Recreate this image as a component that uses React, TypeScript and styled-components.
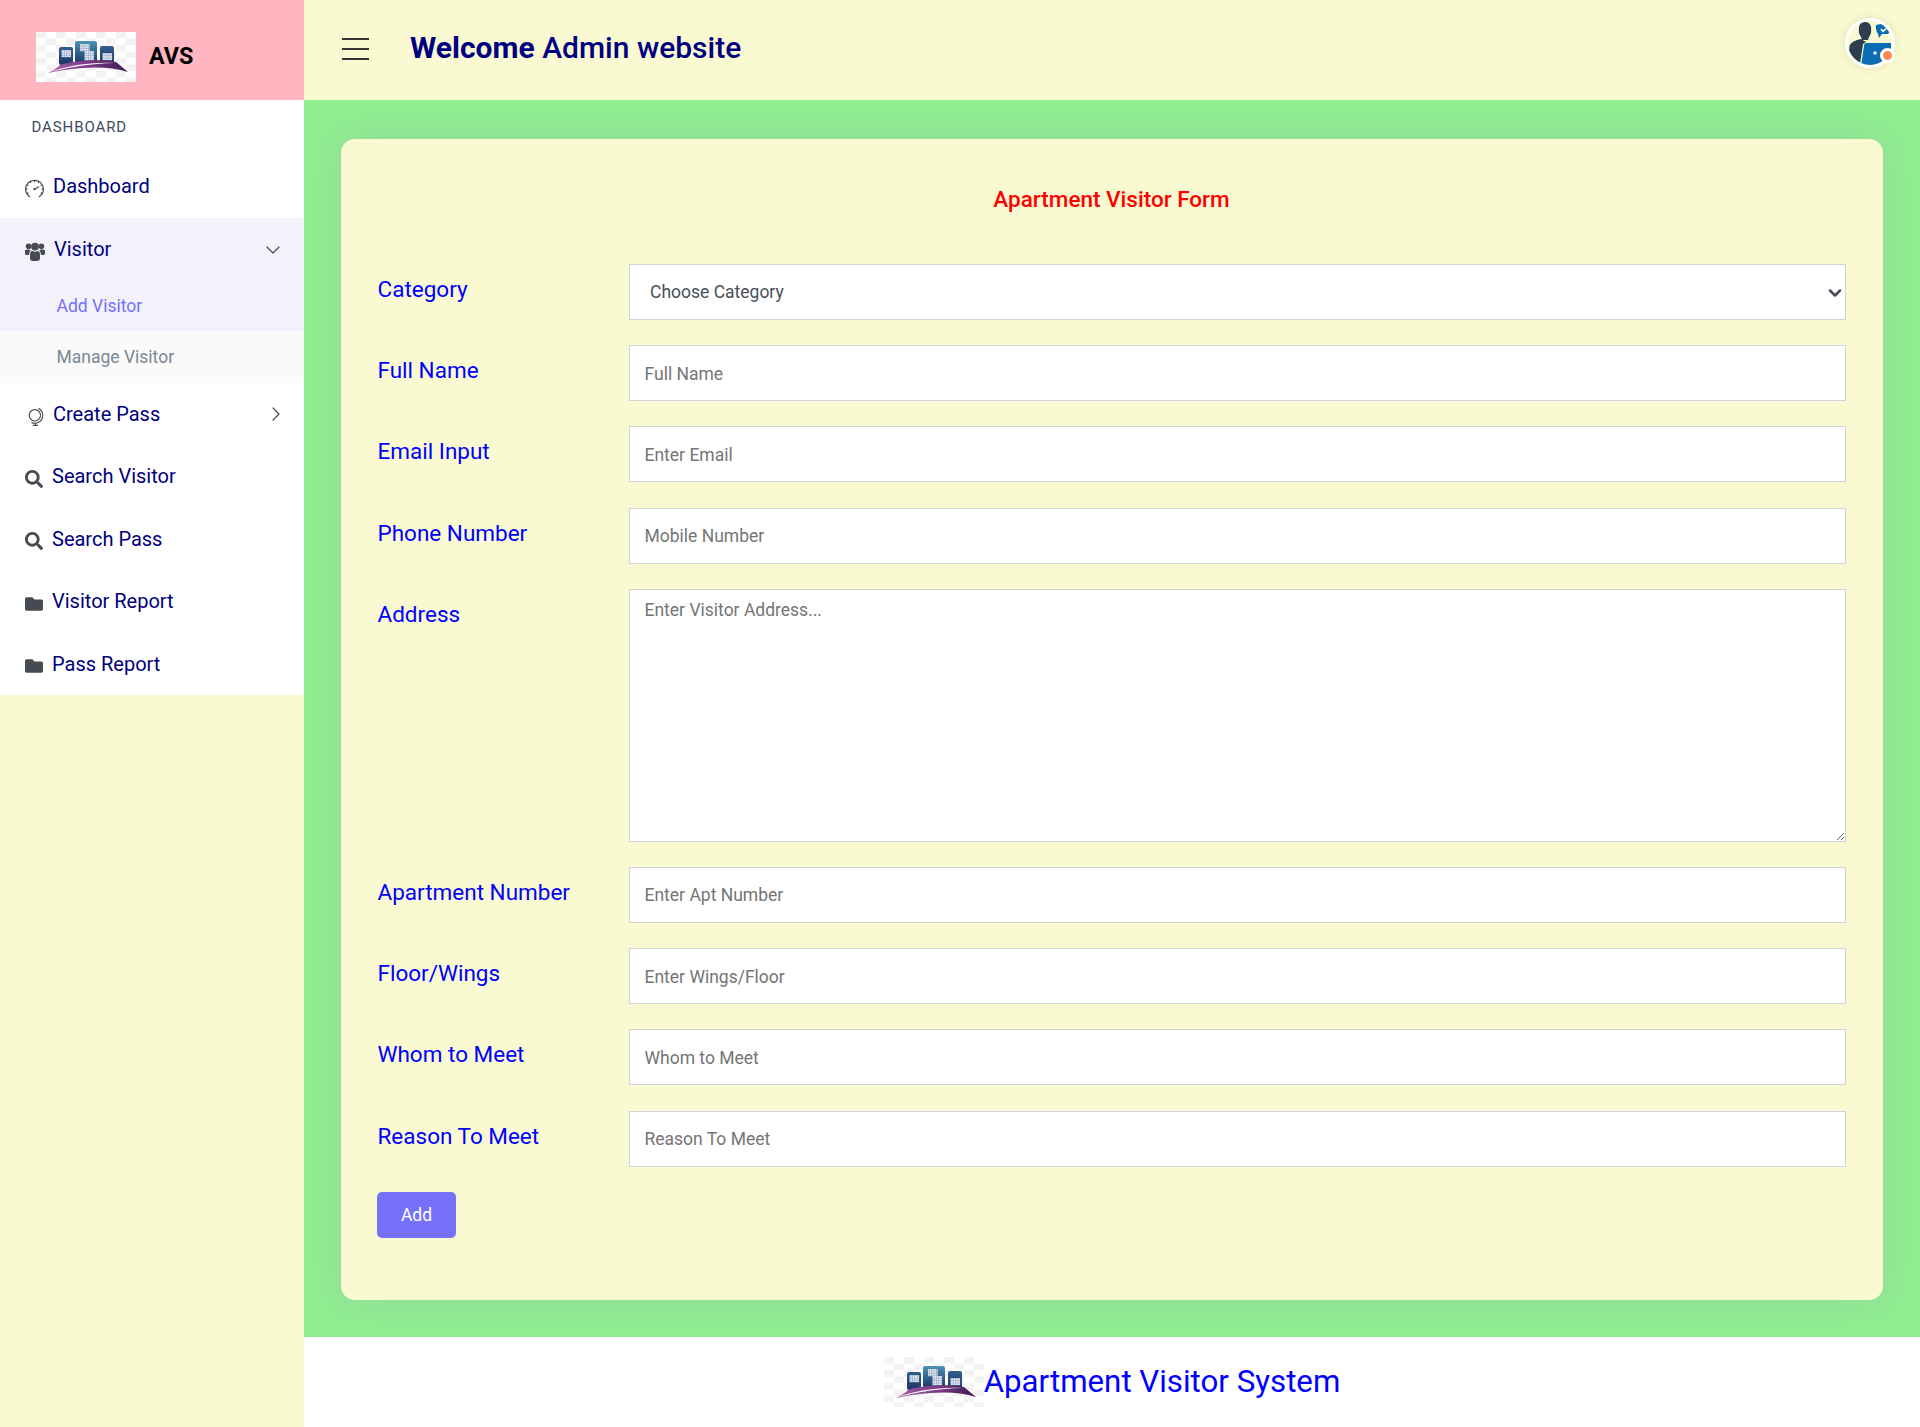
import React from 'react'
import styled, { createGlobalStyle } from 'styled-components'
import { SlSpeedometer, SlGlobeAlt } from 'react-icons/sl'
import { FaSearch, FaFolder } from 'react-icons/fa'
import { ChevronDown, ChevronRight } from 'lucide-react'

const Global = createGlobalStyle`
  html, body { margin: 0; padding: 0; }
  body { font-family: Roboto, "Liberation Sans", sans-serif; background: #fafad2; }
  * { box-sizing: border-box; }
`

const fields = [
  { label: 'Full Name', placeholder: 'Full Name' },
  { label: 'Email Input', placeholder: 'Enter Email' },
  { label: 'Phone Number', placeholder: 'Mobile Number' },
]
const fields2 = [
  { label: 'Apartment Number', placeholder: 'Enter Apt Number' },
  { label: 'Floor/Wings', placeholder: 'Enter Wings/Floor' },
  { label: 'Whom to Meet', placeholder: 'Whom to Meet' },
  { label: 'Reason To Meet', placeholder: 'Reason To Meet' },
]

const Logo = ({ id }: { id: string }) => (
  <LogoSvg viewBox="0 0 100 50">
    <defs>
      <pattern id={`check-${id}`} width="20" height="13" patternUnits="userSpaceOnUse">
        <rect width="20" height="13" fill="#fff" />
        <rect x="0" y="0" width="10" height="6.5" fill="#f3f3f3" />
        <rect x="10" y="6.5" width="10" height="6.5" fill="#f3f3f3" />
      </pattern>
      <pattern id={`win-${id}`} width="2.4" height="2.4" patternUnits="userSpaceOnUse">
        <rect width="2.4" height="2.4" fill="#dfe6f0" />
        <rect x="2" width="0.4" height="2.4" fill="#7f93b3" />
        <rect y="2" width="2.4" height="0.4" fill="#7f93b3" />
      </pattern>
      <linearGradient id={`tower-${id}`} x1="0" y1="0" x2="0" y2="1">
        <stop offset="0" stopColor="#2f5f8c" />
        <stop offset="1" stopColor="#1c3468" />
      </linearGradient>
      <linearGradient id={`mid-${id}`} x1="0" y1="0" x2="0" y2="1">
        <stop offset="0" stopColor="#4d94b5" />
        <stop offset="1" stopColor="#1c3468" />
      </linearGradient>
      <linearGradient id={`swoosh-${id}`} x1="0" y1="0" x2="1" y2="0">
        <stop offset="0" stopColor="#a860a8" />
        <stop offset="0.5" stopColor="#7c3a86" />
        <stop offset="1" stopColor="#3d1a55" />
      </linearGradient>
    </defs>
    <rect width="100" height="50" fill={`url(#check-${id})`} />
    <rect x="23" y="15" width="14" height="18" rx="2" fill={`url(#tower-${id})`} />
    <rect x="39" y="9" width="22" height="22" rx="2" fill={`url(#mid-${id})`} />
    <rect x="64" y="14" width="14" height="18" rx="2" fill={`url(#tower-${id})`} />
    <rect x="25.5" y="18" width="9.6" height="7.2" fill={`url(#win-${id})`} />
    <rect x="44" y="12" width="9.6" height="7.2" fill={`url(#win-${id})`} />
    <rect x="48.5" y="19" width="9.6" height="9.6" fill={`url(#win-${id})`} />
    <rect x="66.5" y="21" width="9.6" height="7.2" fill={`url(#win-${id})`} />
    <path d="M12 41 C 18 38, 22 35, 24 33 C 40 28, 65 27, 80 30 L 92 40 C 70 33, 40 35, 12 41 Z" fill={`url(#swoosh-${id})`} />
    <path d="M14 40 C 30 34, 55 30, 78 31 C 55 31.5, 35 35, 14 40 Z" fill="#fff" />
  </LogoSvg>
)

const UsersIcon = () => (
  <svg viewBox="0 0 20 19" width="20" height="19" fill="currentColor">
    <circle cx="3.6" cy="4.2" r="2.8" />
    <circle cx="16.4" cy="4.2" r="2.8" />
    <circle cx="10" cy="4.6" r="3.9" />
    <path d="M0 9.2 q0 -1.6 1.6 -1.6 l2.6 0 q0.6 0.6 1.4 1 q-1.6 1.6 -1.6 4.4 l-2.6 0 q-1.4 0 -1.4 -1.4 Z" />
    <path d="M20 9.2 q0 -1.6 -1.6 -1.6 l-2.6 0 q-0.6 0.6 -1.4 1 q1.6 1.6 1.6 4.4 l2.6 0 q1.4 0 1.4 -1.4 Z" />
    <path d="M5 12.6 q0 -3.2 2.4 -3.6 q2.6 1.4 5.2 0 q2.4 0.4 2.4 3.6 l0 4 q0 2.4 -2.4 2.4 l-5.2 0 q-2.4 0 -2.4 -2.4 Z" />
  </svg>
)

const App = () => {
  return (
    <Page>
      <Global />
      <Side>
        <Brand>
          <Logo id="side" />
          <BrandName>AVS</BrandName>
        </Brand>
        <Menu>
          <MenuTitle>DASHBOARD</MenuTitle>
          <MenuItem>
            <MenuIcon w={28}><SlSpeedometer size={19} /></MenuIcon>
            Dashboard
          </MenuItem>
          <OpenGroup>
            <MenuItem>
              <MenuIcon w={29}><UsersIcon /></MenuIcon>
              Visitor
              <Caret right={3} drop={3}><ChevronDown size={24} strokeWidth={1.2} /></Caret>
            </MenuItem>
            <SubItem active>Add Visitor</SubItem>
          </OpenGroup>
          <SubItem>Manage Visitor</SubItem>
          <MenuItem>
            <MenuIcon w={28} inset={2}><SlGlobeAlt size={18} /></MenuIcon>
            Create Pass
            <Caret right={0} drop={0}><ChevronRight size={24} strokeWidth={1.2} /></Caret>
          </MenuItem>
          <MenuItem>
            <MenuIcon w={27}><FaSearch size={18} /></MenuIcon>
            Search Visitor
          </MenuItem>
          <MenuItem>
            <MenuIcon w={27}><FaSearch size={18} /></MenuIcon>
            Search Pass
          </MenuItem>
          <MenuItem>
            <MenuIcon w={27}><FaFolder size={18} /></MenuIcon>
            Visitor Report
          </MenuItem>
          <MenuItem>
            <MenuIcon w={27}><FaFolder size={18} /></MenuIcon>
            Pass Report
          </MenuItem>
        </Menu>
      </Side>
      <Right>
        <Header>
          <Burger><span /><span /><span /></Burger>
          <Title><b>Welcome</b> Admin website</Title>
          <Avatar>
            <svg viewBox="0 0 50 50" width="50" height="50">
              <defs>
                <clipPath id="face"><circle cx="25" cy="25" r="22" /></clipPath>
              </defs>
              <circle cx="25" cy="25" r="23.5" fill="#fafad2" stroke="#fff" strokeWidth="3" />
              <g clipPath="url(#face)">
                <path d="M14 9 q1 -5 6 -5 q5 0 6 5 q1 6 -2 10 l-1 3 l-6 0 l-1 -3 q-3 -4 -2 -10 Z" fill="#2c3e50" />
                <path d="M4 32 q0 -8 8 -10 l4 -1 l5 3 l-3 2 l-3 20 q-8 -2 -11 -8 Z" fill="#2c3e50" />
                <path d="M19 28 q0 -3 3 -3 l24 0 l0 12 l-6 10 l-24 1 Z" fill="#0a6cb4" />
                <path d="M31 7 l10 -2 q5 3 5 7 l-3 4 l-6 0 l-3 4 l-1 -4 q-3 -5 -2 -9 Z" fill="#0a6cb4" />
                <path d="M36 11 l2 2.4 l4 -3.4" fill="none" stroke="#fff" strokeWidth="1.6" />
                <circle cx="30" cy="35" r="1.8" fill="#d9ecf7" />
              </g>
            </svg>
            <Dot />
          </Avatar>
        </Header>
        <Main>
          <Card>
            <CardTitle>Apartment Visitor Form</CardTitle>
            <Form>
              <Row>
                <Label>Category</Label>
                <SelectWrap>
                  <Select defaultValue="">
                    <option value="">Choose Category</option>
                  </Select>
                  <SelectArrow><ChevronDown size={20} strokeWidth={3} /></SelectArrow>
                </SelectWrap>
              </Row>
              {fields.map((f) => (
                <Row key={f.label}>
                  <Label>{f.label}</Label>
                  <Input placeholder={f.placeholder} />
                </Row>
              ))}
              <Row>
                <Label>Address</Label>
                <TextArea placeholder="Enter Visitor Address..." />
              </Row>
              {fields2.map((f) => (
                <Row key={f.label}>
                  <Label>{f.label}</Label>
                  <Input placeholder={f.placeholder} />
                </Row>
              ))}
              <AddButton type="button">Add</AddButton>
            </Form>
          </Card>
        </Main>
        <Footer>
          <Logo id="foot" />
          <FooterText>Apartment Visitor System</FooterText>
        </Footer>
      </Right>
    </Page>
  )
}

export default App

const Page = styled.div`
  display: grid;
  grid-template-columns: 304px 1fr;
  height: 1427px;
  overflow: hidden;
  background: #fafad2;
`
const Side = styled.aside`
  display: flex;
  flex-direction: column;
`
const Brand = styled.div`
  height: 100px;
  background: #ffb6c1;
  display: flex;
  align-items: center;
  padding: 14px 0 0 36px;
  gap: 13px;
`
const LogoSvg = styled.svg`
  width: 100px;
  height: 50px;
  flex: none;
`
const BrandName = styled.div`
  font-size: 23.3px;
  font-weight: 700;
  color: #000;
  margin-bottom: 2px;
`
const Menu = styled.nav`
  background: #fff;
  display: flex;
  flex-direction: column;
`
const MenuTitle = styled.div`
  height: 55.6px;
  padding: 18px 0 0 31.5px;
  font-size: 15px;
  line-height: 18px;
  letter-spacing: 0.9px;
  color: #3d4a5c;
`
const OpenGroup = styled.div`
  background: #f3f1fa;
`
const MenuItem = styled.div`
  height: 62.4px;
  display: flex;
  align-items: center;
  padding: 0 16px 1px 25px;
  font-size: 20px;
  color: #000080;
`
const MenuIcon = styled.span<{ w: number; inset?: number }>`
  width: ${({ w }) => w}px;
  flex: none;
  display: flex;
  align-items: center;
  color: #464a53;
  padding: 5px 0 0 ${({ inset }) => inset || 0}px;
`
const Caret = styled.span<{ right: number; drop: number }>`
  margin: ${({ drop }) => drop}px ${({ right }) => right}px 0 auto;
  display: flex;
  color: #464a53;
`
const SubItem = styled.div<{ active?: boolean }>`
  height: ${({ active }) => (active ? 51 : 52)}px;
  display: flex;
  align-items: center;
  padding-left: 56.5px;
  font-size: 17.5px;
  color: ${({ active }) => (active ? '#7571f9' : '#7c8792')};
  background: ${({ active }) => (active ? 'transparent' : '#fafafa')};
`
const Right = styled.div`
  display: flex;
  flex-direction: column;
  min-width: 0;
`
const Header = styled.header`
  height: 100px;
  background: #fafad2;
  display: flex;
  align-items: center;
  padding: 0 25px 5px 38px;
`
const Burger = styled.div`
  width: 27px;
  height: 22px;
  margin: 3px 41px 0 0;
  display: flex;
  flex-direction: column;
  justify-content: space-between;
  span {
    display: block;
    height: 2px;
    background: #333;
  }
`
const Title = styled.h1`
  margin: 0;
  font-size: 30px;
  font-weight: 500;
  color: #000080;
  b { font-weight: 700; }
`
const Avatar = styled.div`
  position: relative;
  margin: -9px 0 0 auto;
  width: 50px;
  height: 50px;
  display: flex;
  border-radius: 50%;
  box-shadow: 0 0 8px rgba(120, 120, 90, 0.2);
  svg { display: block; }
`
const Dot = styled.span`
  position: absolute;
  right: 0;
  bottom: 5px;
  width: 15px;
  height: 15px;
  border-radius: 50%;
  background: #ff8a50;
  border: 3px solid #fff;
`
const Main = styled.main`
  flex: 1;
  background: #90ee90;
  padding: 39px 37px 37px;
`
const Card = styled.section`
  background: #fafad2;
  border-radius: 14px;
  padding: 46px 37.5px 62px 36.5px;
  box-shadow: 0 0 35px rgba(154, 161, 171, 0.3);
`
const CardTitle = styled.h2`
  margin: 0 0 51px;
  text-align: center;
  font-size: 22.5px;
  line-height: 28px;
  font-weight: 500;
  color: #f00;
`
const Form = styled.form`
  display: flex;
  flex-direction: column;
  align-items: stretch;
  gap: 25.2px;
`
const Row = styled.div`
  display: grid;
  grid-template-columns: 251.5px 1fr;
`
const Label = styled.label`
  font-size: 22.5px;
  line-height: 28px;
  padding-top: 11px;
  color: #00f;
`
const SelectWrap = styled.div`
  position: relative;
  display: flex;
`
const Select = styled.select`
  flex: 1;
  height: 56px;
  appearance: none;
  border: 1.5px solid #ced4da;
  border-radius: 0;
  background: #fff;
  padding: 0 20px;
  font: 17.5px Roboto, sans-serif;
  color: #495057;
  outline: none;
`
const SelectArrow = styled.span`
  position: absolute;
  right: 1px;
  top: 19px;
  display: flex;
  color: #464a53;
  pointer-events: none;
`
const Input = styled.input`
  height: 56px;
  border: 1.5px solid #ced4da;
  background: #fff;
  padding: 1px 14.5px 0;
  font: 17.5px Roboto, sans-serif;
  color: #495057;
  outline: none;
`
const TextArea = styled.textarea`
  height: 253px;
  border: 1.5px solid #ced4da;
  background: #fff;
  padding: 10px 14.5px;
  font: 17.5px Roboto, sans-serif;
  color: #495057;
  outline: none;
  resize: vertical;
`
const AddButton = styled.button`
  align-self: flex-start;
  margin-left: -0.5px;
  width: 79px;
  height: 46px;
  border: 0;
  border-radius: 5px;
  background: #7571f9;
  color: #fff;
  font: 400 17.5px Roboto, sans-serif;
`
const Footer = styled.footer`
  height: 90px;
  background: #fff;
  display: flex;
  align-items: center;
  justify-content: center;
`
const FooterText = styled.div`
  font-size: 31.25px;
  color: #00f;
  margin-bottom: 2px;
`
